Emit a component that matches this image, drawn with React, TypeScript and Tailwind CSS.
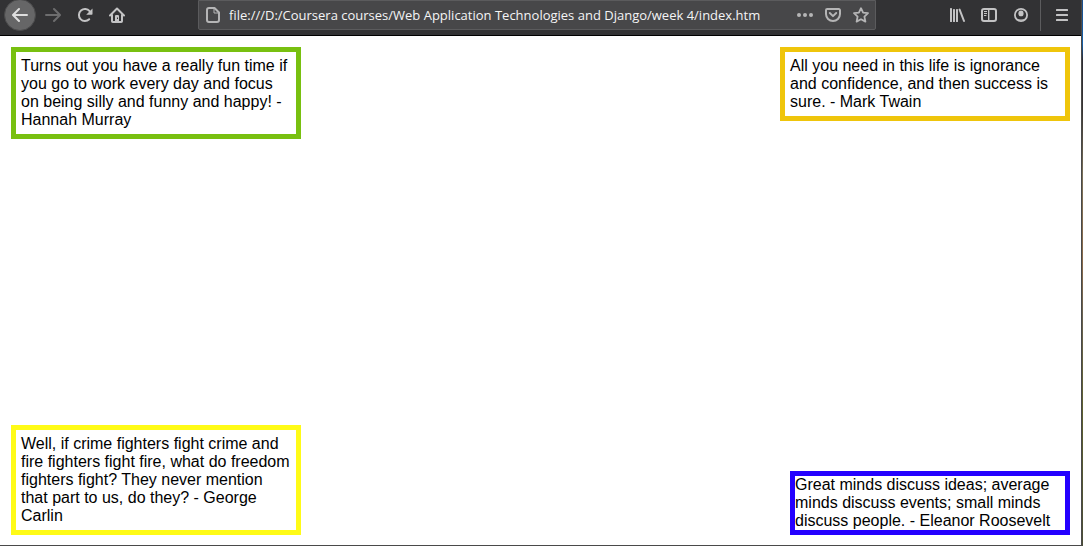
import type { ReactNode } from "react";

function Icon({ children }: { children: ReactNode }) {
  return (
    <svg viewBox="0 0 16 16" className="size-4 shrink-0" fill="currentColor" aria-hidden="true">
      {children}
    </svg>
  );
}

function ToolButton({
  label,
  className = "",
  disabled = false,
  children,
}: {
  label: string;
  className?: string;
  disabled?: boolean;
  children: ReactNode;
}) {
  return (
    <button
      type="button"
      aria-label={label}
      disabled={disabled}
      className={`flex size-8 shrink-0 items-center justify-center ${className}`}
    >
      {children}
    </button>
  );
}

const BACK =
  "M15 7H3.414l4.293-4.293a1 1 0 0 0-1.414-1.414l-6 6a1 1 0 0 0 0 1.414l6 6a1 1 0 0 0 1.414-1.414L3.414 9H15a1 1 0 0 0 0-2z";

function Toolbar() {
  return (
    <header className="flex h-9 items-center overflow-hidden border-b border-black bg-[#323234] pb-[5px] pr-[3px] pl-1 text-[#c3c3c4]">
      <nav aria-label="Navigation" className="flex shrink-0 items-center">
        <ToolButton label="Back" className="mr-px rounded-full border border-[#4a4a4b] bg-[#666667] text-[#dedede]">
          <Icon>
            <path d={BACK} />
          </Icon>
        </ToolButton>
        <ToolButton label="Forward" disabled className="text-[#6d6d6e]">
          <Icon>
            <path d={BACK} transform="translate(16 0) scale(-1 1)" />
          </Icon>
        </ToolButton>
        <ToolButton label="Reload">
          <Icon>
            <path
              d="M12.200 12.200A6 6 0 1 1 12.600 4.200"
              fill="none"
              stroke="currentColor"
              strokeWidth="2"
              strokeLinecap="round"
            />
            <path d="M15.500 1.500V7a.8.8 0 0 1-.8.8H9.200z" />
          </Icon>
        </ToolButton>
        <ToolButton label="Home">
          <Icon>
            <g fill="none" stroke="currentColor" strokeWidth="2" strokeLinejoin="round" strokeLinecap="round">
              <path d="M1 8.500 8 1.500l7 7" />
              <path d="M3 8v6.200a.8.8 0 0 0 .8.8h8.400a.8.8 0 0 0 .8-.8V8" />
            </g>
            <path d="M6 9a1 1 0 0 1 1-1h2a1 1 0 0 1 1 1v6H6z" />
            <path d="M8 10.500h1V12H8z" fill="#323234" />
          </Icon>
        </ToolButton>
      </nav>

      <div className="mx-[65px] flex h-[30px] min-w-0 flex-1 items-center rounded-b-xs border border-[#5b5b5d] bg-[#474749] px-1.5 text-[#b5b5b6]">
        <Icon>
          <path
            d="M4 1h5.500L14 5.500V13a2 2 0 0 1-2 2H4a2 2 0 0 1-2-2V3a2 2 0 0 1 2-2z"
            fill="none"
            stroke="currentColor"
            strokeWidth="2"
            strokeLinejoin="round"
          />
          <path d="M9 1v5h5" fill="none" stroke="currentColor" strokeWidth="1" />
        </Icon>
        <input
          type="text"
          aria-label="Address"
          defaultValue="file:///D:/Coursera courses/Web Application Technologies and Django/week 4/index.htm"
          className="ml-2 h-7 min-w-0 flex-1 bg-transparent font-['Open_Sans',sans-serif] text-[13px] text-[#f4f4f5] outline-none"
        />
        <div className="flex shrink-0 items-center gap-3">
          <button type="button" aria-label="Page actions">
            <Icon>
              <circle cx="2" cy="8" r="2" />
              <circle cx="8" cy="8" r="2" />
              <circle cx="14" cy="8" r="2" />
            </Icon>
          </button>
          <button type="button" aria-label="Save to Pocket">
            <Icon>
              <g fill="none" stroke="currentColor" strokeWidth="2" strokeLinecap="round" strokeLinejoin="round">
                <path d="M2.200 2h11.600A1.200 1.200 0 0 1 15 3.200V7a7 7 0 0 1-14 0V3.200A1.200 1.200 0 0 1 2.200 2z" />
                <path d="M4.800 6 8 9.100 11.200 6" />
              </g>
            </Icon>
          </button>
          <button type="button" aria-label="Bookmark this page">
            <Icon>
              <path
                d="M8 1.200 10.100 5.600 15 6.200 11.400 9.600 12.400 14.600 8 12.200 3.600 14.600 4.600 9.600 1 6.200 5.900 5.600z"
                fill="none"
                stroke="currentColor"
                strokeWidth="1.800"
                strokeLinejoin="round"
              />
            </Icon>
          </button>
        </div>
      </div>

      <div className="flex shrink-0 items-center">
        <ToolButton label="Library">
          <Icon>
            <rect x="1" y="1" width="2" height="14" rx=".6" />
            <rect x="4" y="2" width="2" height="13" rx=".6" />
            <rect x="7" y="2" width="2" height="13" rx=".6" />
            <path d="M10.600 2.600 15 14" stroke="currentColor" strokeWidth="2" strokeLinecap="round" />
          </Icon>
        </ToolButton>
        <ToolButton label="Sidebars">
          <Icon>
            <rect x="1" y="2" width="14" height="12" rx="2" fill="none" stroke="currentColor" strokeWidth="2" />
            <path d="M7 2h1.400v12H7zM3 4h3v1H3zM3 6h3v1H3zM3 8h2.400v1H3z" />
          </Icon>
        </ToolButton>
        <ToolButton label="Account">
          <Icon>
            <circle cx="8" cy="8" r="6.100" fill="none" stroke="currentColor" strokeWidth="1.800" />
            <ellipse cx="8" cy="6.400" rx="2.600" ry="2.900" />
            <path d="M3 11.200Q8 13.600 13 11.200L11 13.500H5z" />
          </Icon>
        </ToolButton>
        <div className="mr-[5px] ml-[3px] h-8 w-px bg-[#5c5c5e]" />
        <ToolButton label="Menu">
          <Icon>
            <rect x="2" y="2" width="12" height="2" rx=".5" />
            <rect x="2" y="7" width="12" height="2" rx=".5" />
            <rect x="2" y="12" width="12" height="2" rx=".5" />
          </Icon>
        </ToolButton>
      </div>
    </header>
  );
}

function Quote({ className, children }: { className: string; children: ReactNode }) {
  return <p className={`border-[5px] ${className}`}>{children}</p>;
}

export default function App() {
  return (
    <div className="flex min-h-screen bg-white">
      <div className="flex min-w-0 flex-1 flex-col border-r border-b border-[#4a4a4a]">
        <Toolbar />
        <main className="flex flex-1 flex-col justify-between gap-8 px-[11px] pt-[11px] pb-2.5 font-['Liberation_Sans',Arial,sans-serif] text-base leading-[18px] text-black">
          <div className="flex items-start justify-between gap-4">
            <Quote className="w-[290px] border-[#78c010] p-[5px]">
              Turns out you have a really fun time if you go to work every day and focus on being silly and funny and
              happy! - Hannah Murray
            </Quote>
            <Quote className="w-[290px] border-[#efc50b] p-[5px]">
              All you need in this life is ignorance and confidence, and then success is sure. - Mark Twain
            </Quote>
          </div>
          <div className="flex items-end justify-between gap-4">
            <Quote className="w-[290px] border-[#fffb17] p-[5px]">
              Well, if crime fighters fight crime and fire fighters fight fire, what do freedom fighters fight? They
              never mention that part to us, do they? - George Carlin
            </Quote>
            <Quote className="w-[280px] border-[#2400ff]">
              Great minds discuss ideas; average minds discuss events; small minds discuss people. - Eleanor Roosevelt
            </Quote>
          </div>
        </main>
      </div>
      <div className="w-px bg-[linear-gradient(#1c4f8c_0%,#1560a8_8%,#2c2c34_11%,#3a3634_20%,#7a7058_32%,#8a6a4a_48%,#6a6250_58%,#5f6130_75%,#4c4e38_100%)]" />
    </div>
  );
}
